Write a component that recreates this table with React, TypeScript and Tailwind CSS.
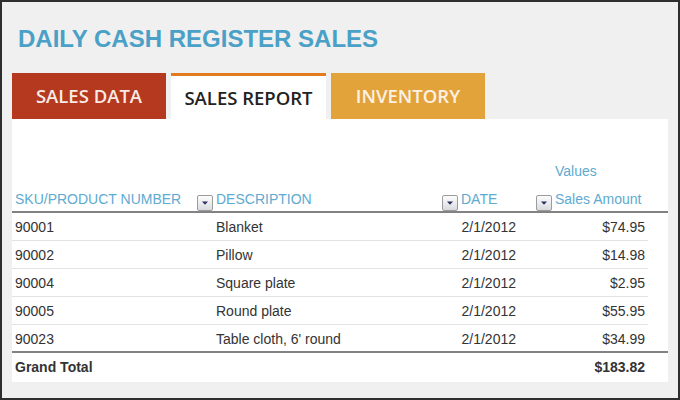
import React from "react";

const DD = () => (
  <span className="flex h-[16px] w-[16px] items-center justify-center rounded-[2px] border border-[#9c9c9c] bg-gradient-to-b from-[#fdfdfd] to-[#d9dbe0]">
    <svg width="8" height="6" viewBox="0 0 8 6">
      <path d="M1 1.5 L7 1.5 L4 4.8 Z" fill="#2a2f5c" />
    </svg>
  </span>
);

const rows = [
  ["90001", "Blanket", "2/1/2012", "$74.95"],
  ["90002", "Pillow", "2/1/2012", "$14.98"],
  ["90004", "Square plate", "2/1/2012", "$2.95"],
  ["90005", "Round plate", "2/1/2012", "$55.95"],
  ["90023", "Table cloth, 6' round", "2/1/2012", "$34.99"],
];

export default function App() {
  return (
    <div className="h-[400px] w-[680px] overflow-hidden border-2 border-[#2f2f2f] bg-[#f0f0f0] font-['Liberation_Sans',Arial,sans-serif]">
      <div className="pl-[16px] pt-[23px] text-[24px] font-bold leading-[28px] text-[#4aa0c7]">
        DAILY CASH REGISTER SALES
      </div>
      <div className="mt-[20px] flex gap-[5px] pl-[10px] font-['Open_Sans',sans-serif] text-[18.5px] font-semibold">
        <div className="flex h-[46px] w-[154px] items-center justify-center bg-[#b5391f] text-[#f7ebe6]">
          SALES DATA
        </div>
        <div className="flex h-[46px] w-[155px] items-center justify-center border-t-[3px] border-[#e07b1e] bg-white pt-[1px] text-[#222]">
          SALES REPORT
        </div>
        <div className="flex h-[46px] w-[154px] items-center justify-center bg-[#e2a33a] text-[#fcf1e4]">
          INVENTORY
        </div>
      </div>
      <div className="ml-[10px] h-[263px] w-[656px] bg-white pt-[38px] text-[14px] text-[#333]">
        <div className="grid h-[28px] grid-cols-[201px_245px_94px_96px_20px] items-end pb-[6px] leading-[16px] text-[#5eaad0]">
          <div />
          <div />
          <div />
          <div className="pl-[3px]">Values</div>
          <div />
        </div>
        <div className="grid h-[28px] grid-cols-[201px_245px_94px_96px_20px] border-b-2 border-[#828282] leading-[16px] text-[#5eaad0]">
          <div className="flex items-start justify-between pl-[3px] pt-[6px]">
            <span>SKU/PRODUCT NUMBER</span>
            <span className="mt-[4px]"><DD /></span>
          </div>
          <div className="flex items-start justify-between pl-[3px] pt-[6px]">
            <span>DESCRIPTION</span>
            <span className="mt-[4px]"><DD /></span>
          </div>
          <div className="flex items-start justify-between pl-[3px] pt-[6px]">
            <span>DATE</span>
            <span className="mt-[4px]"><DD /></span>
          </div>
          <div className="pl-[3px] pt-[6px]">Sales Amount</div>
          <div />
        </div>
        {rows.map((r, i) => (
          <div
            key={r[0]}
            className={
              i === rows.length - 1
                ? "grid h-[28px] grid-cols-[201px_245px_94px_96px_20px] border-b-2 border-[#828282] pt-[6px] leading-[16px]"
                : "grid h-[28px] grid-cols-[201px_245px_94px_96px_20px] pt-[6px] leading-[16px]"
            }
          >
            <div className="pl-[3px]">{r[0]}</div>
            <div className="pl-[3px]">{r[1]}</div>
            <div className="pr-[36px] text-right">{r[2]}</div>
            <div className="pr-[3px] text-right">{r[3]}</div>
            <div />
            {i !== rows.length - 1 && (
              <div className="col-span-4 mt-[5px] h-px bg-[#e3e3e3]" />
            )}
          </div>
        ))}
        <div className="grid h-[29px] grid-cols-[201px_245px_94px_96px_20px] pt-[6px] font-bold leading-[16px]">
          <div className="pl-[3px]">Grand Total</div>
          <div />
          <div />
          <div className="pr-[3px] text-right">$183.82</div>
          <div />
        </div>
      </div>
    </div>
  );
}
